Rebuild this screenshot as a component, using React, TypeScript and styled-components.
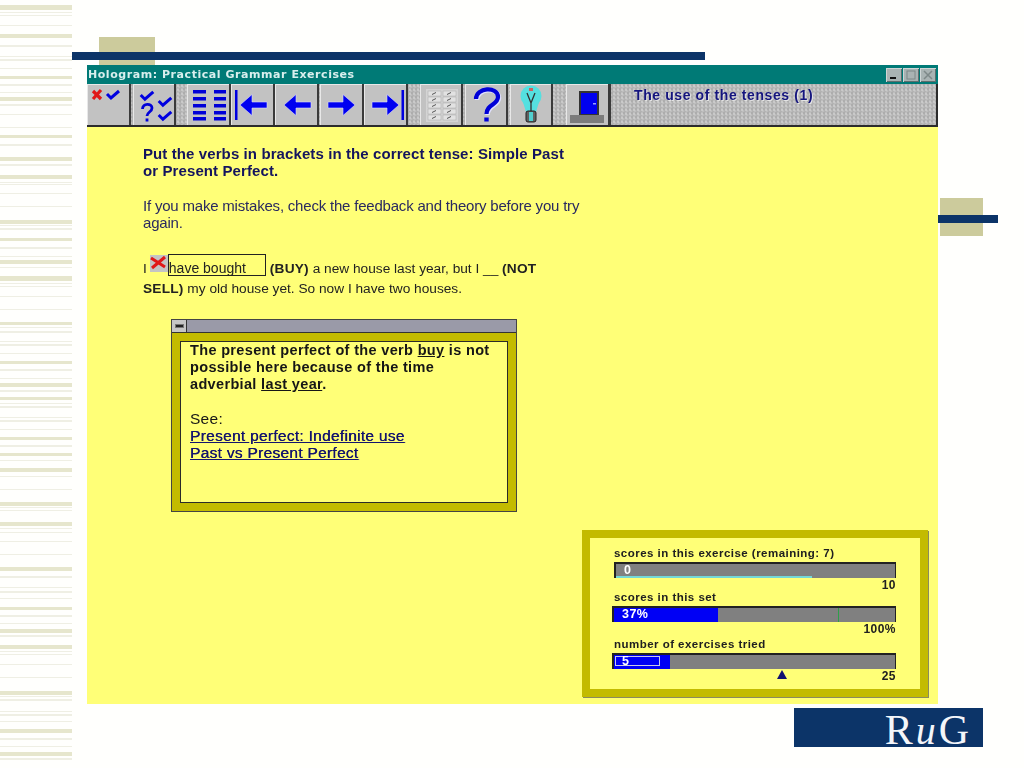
import React from "react";
import styled, { createGlobalStyle } from "styled-components";

const Global = createGlobalStyle`
  html, body { margin: 0; padding: 0; background: #fff; }
  #root { width: 1024px; height: 768px; overflow: hidden; }
`;

const noise = `
  radial-gradient(circle at 1px 1px, #a8a8a8 0.6px, transparent 1px),
  radial-gradient(circle at 3px 2px, #d0d0d0 0.6px, transparent 1px),
  radial-gradient(circle at 2px 3px, #b0b0b0 0.6px, transparent 1px)
`;

const Slide = styled.div`
  position: relative;
  width: 1024px;
  height: 768px;
  background: #fffffd;
  display: flex;
  overflow: hidden;
  font-family: "Liberation Sans", Arial, sans-serif;
`;
const StripeArt = styled.svg`
  width: 73px;
  height: 768px;
  flex: none;
  display: block;
`;
const Main = styled.main`
  position: relative;
  flex: 1;
  display: flex;
  flex-direction: column;
  padding: 65px 0 0 14px;
`;
const Block = styled.div<{ $l: number; $t: number; $w: number; $h: number; $c: string }>`
  position: absolute;
  left: ${(p) => p.$l}px;
  top: ${(p) => p.$t}px;
  width: ${(p) => p.$w}px;
  height: ${(p) => p.$h}px;
  background: ${(p) => p.$c};
`;
const Win = styled.section`
  position: relative;
  width: 851px;
  height: 639px;
  display: flex;
  flex-direction: column;
  filter: blur(0.35px);
`;
const TitleBar = styled.header`
  height: 19px;
  background: #007a76;
  display: flex;
  align-items: center;
  justify-content: space-between;
  padding: 0 2px 0 1px;
  color: #d9efee;
  font: bold 11px "DejaVu Sans", Verdana, sans-serif;
  letter-spacing: 0.55px;
`;
const Controls = styled.div`
  display: flex;
  gap: 1px;
  margin-top: 1px;
`;
const Ctl = styled.div`
  width: 16px;
  height: 14px;
  background: #a9b3b3;
  box-shadow: inset 1px 1px 0 #cfd6d6, inset -1px -1px 0 #5f6d6d;
  display: flex;
  align-items: center;
  justify-content: center;
`;
const Toolbar = styled.nav`
  height: 43px;
  box-sizing: border-box;
  display: flex;
  background-color: #bdbdbd;
  background-image: ${noise};
  background-size: 4px 4px;
  border-bottom: 2px solid #2c2c2c;
`;
const Btn = styled.div<{ $w: number; $ml?: number }>`
  width: ${(p) => p.$w}px;
  margin-left: ${(p) => p.$ml ?? 0}px;
  flex: none;
  box-sizing: border-box;
  background: #c2c2c2;
  border-right: 2px solid #3a3a3a;
  box-shadow: inset 1px 1px 0 #e8e8e8;
  svg { display: block; }
`;
const Panel = styled.div`
  flex: 1;
  padding: 1px 0 0 23px;
  border-left: 1px solid #3a3a3a;
  border-right: 2px solid #2c2c2c;
  color: #14147e;
  font: bold 14px "Liberation Sans", Arial, sans-serif;
  letter-spacing: 0.6px;
  line-height: 20px;
  text-shadow: 1px 1px 0 #e4e4e4;
`;
const Content = styled.div`
  flex: 1;
  background: #ffff77;
  display: flex;
  flex-direction: column;
  padding: 18px 10px 7px 56px;
  min-height: 0;
`;
const Heading = styled.h1`
  margin: 0;
  width: 428px;
  font-size: 15px;
  line-height: 17px;
  font-weight: bold;
  color: #14145e;
  letter-spacing: 0.1px;
`;
const Hint = styled.p`
  margin: 18px 0 0;
  width: 445px;
  font-size: 15px;
  line-height: 17px;
  color: #2a2a60;
  letter-spacing: -0.2px;
`;
const Exercise = styled.p`
  margin: 23px 0 0;
  width: 400px;
  font-size: 13.7px;
  line-height: 20px;
  color: #222;
  b { letter-spacing: 0.2px; }
`;
const Cross = styled.span`
  display: inline-block;
  vertical-align: 1px;
  width: 18px;
  height: 17px;
  margin-left: 3px;
  background: #c4c4c4;
  svg { display: block; }
`;
const Answer = styled.span`
  display: inline-block;
  box-sizing: border-box;
  width: 98px;
  height: 22px;
  font-size: 14px;
  line-height: 27px;
  vertical-align: -3px;
  overflow: hidden;
  border: 1px solid #222;
  margin: 0 4px 0 0;
`;
const Popup = styled.div`
  margin: 20px 0 0 28px;
  width: 346px;
  height: 193px;
  box-sizing: border-box;
  border: 1px solid #444;
  display: flex;
  flex-direction: column;
  flex: none;
`;
const PopupBar = styled.div`
  height: 12px;
  background: #9a9aa8;
  border-bottom: 1px solid #333;
  display: flex;
`;
const SysBox = styled.div`
  width: 14px;
  background: #c6c6c6;
  border-right: 1px solid #333;
  display: flex;
  align-items: center;
  justify-content: center;
  &::after { content: ""; width: 7px; height: 2px; background: #222; border: 1px solid #777; }
`;
const PopupFrame = styled.div`
  flex: 1;
  padding: 8px;
  background: #c3bb00;
  display: flex;
`;
const PopupBody = styled.div`
  flex: 1;
  border: 1px solid #2a2a2a;
  background: #ffff77;
  padding: 0 0 0 9px;
  font-size: 15.5px;
  line-height: 17px;
  color: #161616;
  letter-spacing: 0.28px;
  a { display: block; color: #14146e; text-decoration: underline; text-shadow: 0.3px 0 0 #14146e; }
  strong { display: block; width: 305px; font-size: 14.5px; font-weight: bold; letter-spacing: 0.34px; }
  span { display: block; }
`;
const Score = styled.aside`
  margin-top: auto;
  align-self: flex-end;
  width: 346px;
  height: 167px;
  box-sizing: border-box;
  border: 8px solid #c3bb00;
  box-shadow: 1px 1px 0 #8a8a60;
  padding: 8px 24px 0 24px;
  font-size: 11.5px;
  font-weight: bold;
  color: #202020;
  letter-spacing: 0.47px;
`;
const Label = styled.div<{ $mt?: number }>`
  line-height: 14px;
  height: 14px;
  margin-top: ${(p) => p.$mt ?? 0}px;
`;
const Track = styled.div<{ $ml?: number }>`
  position: relative;
  height: 16px;
  box-sizing: border-box;
  margin-top: 2px;
  margin-left: ${(p) => p.$ml ?? 0}px;
  background: #808080;
  border-top: 2px solid #222;
  border-left: 2px solid #222;
  border-right: 1px solid #222;
  color: #fff;
  font-size: 12.5px;
  line-height: 13px;
  padding-left: 8px;
  overflow: hidden;
`;
const Fill = styled.div<{ $w: number }>`
  position: absolute;
  left: 0;
  top: 0;
  bottom: 0;
  background: #0000f5;
  width: ${(p) => p.$w}px;
`;
const CyanLine = styled.div<{ $w: number }>`
  position: absolute;
  left: 0;
  bottom: 0;
  height: 2px;
  background: #73d8d8;
  width: ${(p) => p.$w}px;
`;
const Tick = styled.div<{ $l: number }>`
  position: absolute;
  top: 0;
  bottom: 0;
  left: ${(p) => p.$l}px;
  width: 1px;
  background: #2e9e4a;
`;
const Inner = styled.div`
  position: absolute;
  left: 1px;
  top: 1px;
  width: 45px;
  height: 10px;
  box-sizing: border-box;
  border: 1px solid #c8c8e8;
`;
const TrackText = styled.span`
  position: relative;
`;
const EndRow = styled.div`
  display: flex;
  justify-content: flex-end;
  line-height: 14px;
  height: 12px;
  font-size: 12px;
  position: relative;
`;
const Marker = styled.svg`
  position: absolute;
  left: 162px;
  top: 1px;
`;
const RuG = styled.div`
  margin: 4px 0 0 707px;
  width: 189px;
  height: 39px;
  box-sizing: border-box;
  background: #0c3468;
  color: #f4f6fa;
  font: 42px/44px "Liberation Serif", "Times New Roman", serif;
  text-align: right;
  padding-right: 11px;
  letter-spacing: 3px;
  i { font-size: 40px; }
`;

const stripes: [number, number][] = [
  [5,5],[12,1],[15,1],[25,1],[34,4],[45,2],[56,1],[59,2],[68,1],[76,3],[84,2],[92,1],[97,4],[104,2],[114,1],[127,1],[135,3],[144,2],[157,4],[164,2],[175,4],[182,1],[184,1],[193,1],[206,1],[220,4],[225,1],[228,2],[238,3],[247,2],[256,1],
  [260,4],[267,1],[276,5],[283,1],[286,1],[296,1],[309,1],[322,3],[327,1],[331,2],[341,1],[344,2],[353,1],[361,3],[369,2],[378,1],[383,4],[390,2],[397,3],[403,1],[406,2],[417,1],[420,2],[429,1],[437,3],[445,2],[453,3],[460,1],[468,4],[476,1],[489,1],[502,4],[507,1],[510,1],
  [522,4],[528,1],[532,1],[541,1],[554,1],[567,4],[576,2],[587,1],[591,2],[598,1],[607,3],[615,2],[623,1],[629,4],[635,2],[645,4],[651,1],[654,1],[664,1],[677,1],[691,4],[696,1],[699,2],[711,1],[714,2],[721,1],[729,4],[738,2],[746,1],[752,4],[758,2],
];

const Check = ({ x, y, s = 1 }: { x: number; y: number; s?: number }) => (
  <path d={`M${x - 6 * s} ${y}l${4 * s} ${4 * s}l${8 * s} -${7 * s}`} fill="none" stroke="#0000e0" strokeWidth={3} />
);

const Arrow = ({ dir, bar }: { dir: "l" | "r"; bar?: "l" | "r" }) => {
  const a =
    dir === "l"
      ? "M9 21L21 10.5V18H36V24H21V31.5Z"
      : "M35 21L23 10.5V18H8V24H23V31.5Z";
  return (
    <svg width="43" height="41" viewBox="0 0 43 41">
      <path d={a} fill="#0000f0" stroke="#d8d8ff" strokeWidth="0.6" />
      {bar === "l" && <rect x="4" y="6" width="2.5" height="30" fill="#0000e0" />}
      {bar === "r" && <rect x="37.5" y="6" width="2.5" height="30" fill="#0000e0" />}
    </svg>
  );
};

export default function App() {
  return (
    <Slide>
      <Global />
      <StripeArt viewBox="0 0 73 768" aria-hidden>
        {stripes.map(([y, h], i) => (
          <rect key={i} x="0" y={y} width="72" height={h} fill={h >= 3 ? "#e6e6cd" : "#efefe4"} />
        ))}
      </StripeArt>
      <Main>
        <Block $l={26} $t={37} $w={56} $h={30} $c="#cccb9c" />
        <Block $l={-1} $t={52} $w={633} $h={8} $c="#0c3468" />
        <Block $l={867} $t={198} $w={43} $h={38} $c="#cccb9c" />
        <Block $l={865} $t={215} $w={60} $h={8} $c="#0c3468" />
        <Win>
          <TitleBar>
            <span>Hologram: Practical Grammar Exercises</span>
            <Controls>
              <Ctl>
                <svg width="10" height="10"><rect x="1" y="7" width="6" height="2" fill="#111" /></svg>
              </Ctl>
              <Ctl>
                <svg width="10" height="10"><rect x="1" y="1" width="8" height="8" fill="none" stroke="#7d8888" /></svg>
              </Ctl>
              <Ctl>
                <svg width="10" height="10"><path d="M1 1L9 9M9 1L1 9" stroke="#7d8888" strokeWidth="1.5" /></svg>
              </Ctl>
            </Controls>
          </TitleBar>
          <Toolbar>
            <Btn $w={44}>
              <svg width="42" height="41" viewBox="0 0 42 41">
                <path d="M6 7L14 15M14 6L6 15" stroke="#e01818" strokeWidth="3.2" />
                <Check x={26} y={10} s={1} />
              </svg>
            </Btn>
            <Btn $w={43} $ml={2}>
              <svg width="41" height="41" viewBox="0 0 41 41">
                <Check x={14} y={11} s={1.05} />
                <Check x={32} y={17} s={1.05} />
                <Check x={32} y={31} s={1.05} />
                <path d="M9.5 25c0-6 9.5-6 9.5-1c0 4-5 4-5 8" fill="none" stroke="#0000d8" strokeWidth="2.8" />
                <path d="M14 34.5v3" stroke="#0000d8" strokeWidth="2.8" />
              </svg>
            </Btn>
            <Btn $w={44} $ml={11}>
              <svg width="42" height="41" viewBox="0 0 42 41">
                {[6, 13, 20, 27, 33].map((y) => (
                  <g key={y} fill="#0000d8">
                    <rect x="6" y={y} width="13" height="3.5" />
                    <rect x="27" y={y} width="12" height="3.5" />
                  </g>
                ))}
              </svg>
            </Btn>
            <Btn $w={44}><Arrow dir="l" bar="l" /></Btn>
            <Btn $w={44}><Arrow dir="l" /></Btn>
            <Btn $w={44} $ml={1}><Arrow dir="r" /></Btn>
            <Btn $w={44}><Arrow dir="r" bar="r" /></Btn>
            <Btn $w={43} $ml={12}>
              <svg width="41" height="41" viewBox="0 0 41 41">
                <rect x="6" y="5" width="32" height="33" fill="#d4d4d4" />
                {[0, 1, 2, 3, 4].map((r) =>
                  [0, 1].map((c) => (
                    <g key={`${r}${c}`}>
                      <rect x={8 + c * 15} y={7 + r * 6} width="13" height="5" fill="#e2e2e2" stroke="#a8a8a8" strokeWidth="0.5" />
                      <path d={`M${12 + c * 15} ${10.5 + r * 6}l4 -2`} stroke="#555" strokeWidth="1" />
                    </g>
                  ))
                )}
              </svg>
            </Btn>
            <Btn $w={43} $ml={2}>
              <svg width="41" height="41" viewBox="0 0 41 41">
                <path d="M11 15C11 3 33 2 33 13C33 21 21.5 20 21.5 30" fill="none" stroke="#e0e0ff" strokeWidth="4.5" transform="translate(1 1)" />
                <path d="M11 15C11 3 33 2 33 13C33 21 21.5 20 21.5 30" fill="none" stroke="#0000d8" strokeWidth="4.2" />
                <path d="M21.5 33.5v4" stroke="#0000d8" strokeWidth="4.4" />
              </svg>
            </Btn>
            <Btn $w={43} $ml={2}>
              <svg width="41" height="41" viewBox="0 0 41 41">
                <circle cx="21" cy="12" r="10.5" fill="#55e0e0" />
                <path d="M13 18L16 28H26L29 18Z" fill="#55e0e0" />
                <path d="M17 9l4 10l4 -10M21 19v8" fill="none" stroke="#333" strokeWidth="1.3" />
                <path d="M19 4h4v3h-4z" fill="#d06060" />
                <rect x="16" y="27" width="10" height="11" rx="2" fill="#606060" stroke="#222" />
                <rect x="19" y="28" width="4" height="9" fill="#50d0d0" />
              </svg>
            </Btn>
            <Btn $w={44} $ml={13}>
              <svg width="42" height="41" viewBox="0 0 42 41">
                <rect x="14" y="8" width="18" height="23" fill="#0000f0" stroke="#333" strokeWidth="2" />
                <rect x="27" y="19" width="3" height="1.5" fill="#9aa0ff" />
                <rect x="4" y="31" width="34" height="8" fill="#7c7c7c" />
              </svg>
            </Btn>
            <Panel>The use of the tenses (1)</Panel>
          </Toolbar>
          <Content>
            <Heading>Put the verbs in brackets in the correct tense: Simple Past or Present Perfect.</Heading>
            <Hint>If you make mistakes, check the feedback and theory before you try again.</Hint>
            <Exercise>
              I<Cross>
                <svg width="18" height="17" viewBox="0 0 18 17">
                  <path d="M1 3L15 12M15 2L2 13" stroke="#e01818" strokeWidth="3" />
                </svg>
              </Cross><Answer>have bought</Answer><b>(BUY)</b> a new house last year, but I __ <b>(NOT SELL)</b> my old house yet. So now I have two houses.
            </Exercise>
            <Popup>
              <PopupBar><SysBox /></PopupBar>
              <PopupFrame>
                <PopupBody>
                  <strong>The present perfect of the verb <u>buy</u> is not possible here because of the time adverbial <u>last year</u>.</strong>
                  <span>&nbsp;</span>
                  <span>See:</span>
                  <a>Present perfect: Indefinite use</a>
                  <a>Past vs Present Perfect</a>
                </PopupBody>
              </PopupFrame>
            </Popup>
            <Score>
              <Label>scores in this exercise (remaining: 7)</Label>
              <Track>
                <TrackText>0</TrackText>
                <CyanLine $w={196} />
              </Track>
              <EndRow>10</EndRow>
              <Label>scores in this set</Label>
              <Track $ml={-2}>
                <Fill $w={104} />
                <Tick $l={224} />
                <TrackText>37%</TrackText>
              </Track>
              <EndRow>100%</EndRow>
              <Label $mt={3}>number of exercises tried</Label>
              <Track $ml={-2}>
                <Fill $w={56} />
                <Inner />
                <TrackText>5</TrackText>
              </Track>
              <EndRow>
                <Marker width="12" height="10" viewBox="0 0 12 10"><path d="M6 0L11 9H1Z" fill="#101070" /></Marker>
                25
              </EndRow>
            </Score>
          </Content>
        </Win>
        <RuG>R<i>u</i>G</RuG>
      </Main>
    </Slide>
  );
}
